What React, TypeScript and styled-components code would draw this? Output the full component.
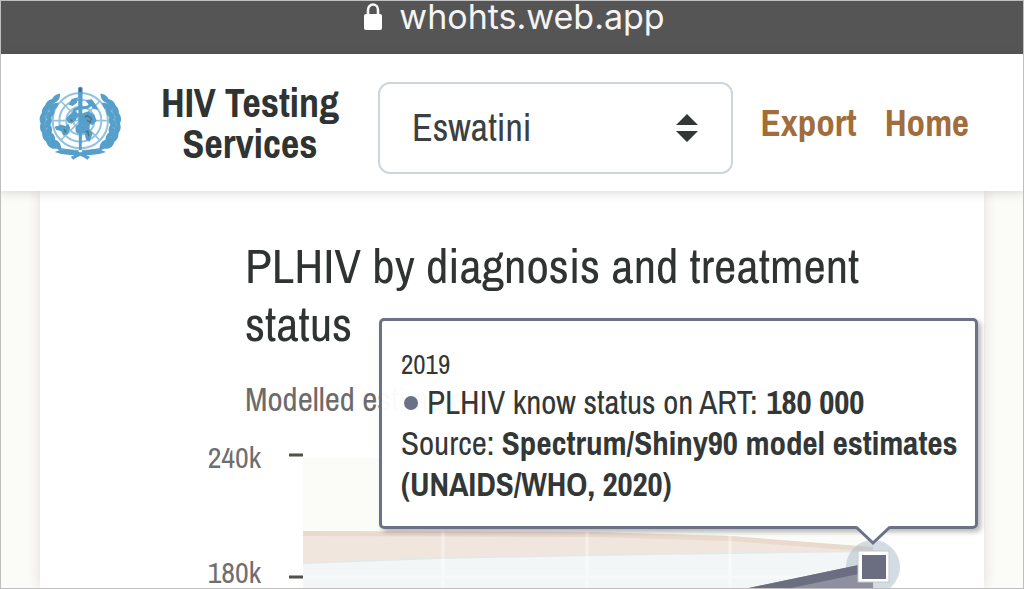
import React from "react";
import styled, { createGlobalStyle } from "styled-components";

const narrow = `"Liberation Sans Narrow", "Archivo Narrow", "Arial Narrow", "Liberation Sans", sans-serif`;
const ink = "#2f3332";
const slate = "#6b7186";

const GlobalStyle = createGlobalStyle`
  *, *::before, *::after { box-sizing: border-box; }
  body { margin: 0; background: #fff; color: ${ink}; font-family: ${narrow}; }
`;

const Shell = styled.div`
  display: flex;
  flex-direction: column;
  height: 100vh;
  overflow: hidden;
  border: 1px solid #bfbfbf;
`;

const AddressBar = styled.div`
  display: flex;
  flex: none;
  justify-content: center;
  align-items: center;
  gap: 16px;
  padding: 0 0 22px 4px;
  height: 53px;
  background: #555;
  color: #f4f4f4;
  font: 400 34px/34px Inter, sans-serif;
`;

const Header = styled.header`
  position: relative;
  z-index: 1;
  display: flex;
  flex: none;
  align-items: center;
  padding: 0 54px 0 37px;
  height: 137px;
  background: #fff;
  box-shadow: 0 2px 10px rgba(0, 0, 0, 0.14);
`;

const SiteTitle = styled.h1`
  margin: 0 34px;
  width: 188px;
  text-align: center;
  font-size: 40px;
  line-height: 41px;
  font-weight: 700;
`;

const SelectWrap = styled.div`
  position: relative;
  flex: 1;
  margin-top: 10px;
`;

const CountrySelect = styled.select`
  appearance: none;
  display: block;
  width: 100%;
  height: 92px;
  padding: 0 80px 0 32px;
  border: 2px solid #ccd6dd;
  border-radius: 12px;
  background: #fff;
  color: #3c403f;
  font: 400 38px/44px ${narrow};
`;

const SelectArrows = styled.svg`
  position: absolute;
  right: 35px;
  top: 32px;
  pointer-events: none;
`;

const Nav = styled.nav`
  display: flex;
  gap: 28px;
  margin-left: 28px;
`;

const NavLink = styled.a`
  color: #a06d3b;
  font-size: 37px;
  line-height: 44px;
  font-weight: 700;
  text-decoration: none;
`;

const Page = styled.main`
  flex: 1;
  min-height: 0;
  padding: 0 39px;
  background: #fbfbf7;
`;

const Card = styled.section`
  height: 100%;
  padding-top: 45px;
  background: #fff;
  box-shadow: 0 0 12px rgba(80, 40, 40, 0.14);
`;

const ChartTitle = styled.h2`
  margin: 0 100px 0 205px;
  font-size: 49px;
  line-height: 58px;
  font-weight: 400;
`;

const Subtitle = styled.p`
  margin: 27px 100px 0 205px;
  color: #6b6b6b;
  font-size: 33px;
  line-height: 40px;
`;

const ChartArea = styled.div`
  position: relative;
  margin: 11px 0 0 160px;
`;

const Chart = styled.svg`
  display: block;
  font-family: ${narrow};
`;

const Tooltip = styled.div`
  position: absolute;
  left: 179px;
  top: -112px;
  width: 599px;
  padding: 25px 16px 21px 19px;
  border: 3px solid ${slate};
  border-radius: 5px;
  background: rgba(255, 255, 255, 0.97);
  box-shadow: 3px 3px 5px rgba(0, 0, 0, 0.28);
  color: #333736;
  font-size: 33px;
  line-height: 41px;
`;

const TooltipYear = styled.div`
  font-size: 27px;
  line-height: 36px;
`;

const TooltipRow = styled.div`
  display: flex;
  align-items: center;
  gap: 9px;
`;

const Dot = styled.span`
  width: 14px;
  height: 14px;
  margin-left: 3px;
  border-radius: 50%;
  background: ${slate};
`;

const Pointer = styled.svg`
  position: absolute;
  right: 84px;
  top: 100%;
`;

function Lock() {
  return (
    <svg width="20" height="29" viewBox="0 0 20 29" aria-hidden="true">
      <path d="M5 14V8a5 5.500 0 0 1 10 0V14" fill="none" stroke="#f8f8f8" strokeWidth="2.600" />
      <rect x="1" y="12" width="18" height="16" rx="2" fill="#fff" />
    </svg>
  );
}

const leaves = [
  [107, 85, 42], [86, 103, 34], [100, 110, 54],
  [74, 123, 14], [91, 132, 38],
  [67, 149, -4], [85, 157, 24],
  [69, 177, -18], [87, 182, 6],
  [78, 203, -34], [96, 205, -12],
  [94, 225, -52], [112, 225, -30],
];

function Branch() {
  return (
    <g>
      <path d="M106 90C68 122 62 190 102 226Q124 246 176 243" fill="none" stroke="#6eadd2" strokeWidth="8" />
      {leaves.map(([x, y, r]) => (
        <path
          key={`${x}-${y}`}
          transform={`translate(${x} ${y}) rotate(${r})`}
          d="M0-20C12-8 12 6 1 19C-12 7-10-8 0-20Z"
          fill="#559fca"
        />
      ))}
      <path d="M104 246Q128 232 160 241T210 261L202 269Q184 253 158 255T104 246Z" fill="#559fca" />
    </g>
  );
}

function Emblem() {
  return (
    <svg width="84" height="76" viewBox="54 45 252 228" role="img" aria-label="World Health Organization">
      <g fill="none" stroke="#93c4df" strokeWidth="6">
        <circle cx="181" cy="152" r="83" />
        <circle cx="181" cy="152" r="63" />
        <circle cx="181" cy="152" r="42" />
        <circle cx="181" cy="152" r="21" />
        <path d="M98 152H264M181 69V235M122 93L240 211M240 93L122 211" strokeWidth="5" />
      </g>
      <g fill="#559fca">
        <path d="M146 104L155 87L174 82L171 98L158 108Z" />
        <path d="M104 170L124 164L136 168L146 162L150 174L144 192L130 197L124 184L108 179Z" />
        <path d="M138 146L151 131L169 123L173 136L168 150L155 161L145 158Z" />
        <path d="M188 130L205 124L223 134L230 152L218 165L210 163L208 178L218 190L209 215L198 209L194 190L184 188L172 191L166 182L179 172L190 166L182 151Z" />
        <path d="M197 91L215 88L226 102L234 120L220 116L210 104Z" />
      </g>
      <path
        d="M204 94C216 104 211 113 184 114C158 116 151 130 180 138C205 145 204 157 183 164C162 172 171 184 186 187"
        fill="none" stroke="#559fca" strokeWidth="9" strokeLinecap="round"
      />
      <path d="M174 54Q181 46 188 54L185 240H177Z" fill="#559fca" />
      <path d="M181 53V66" stroke="#4c6b80" strokeWidth="8" />
      <path d="M194 142L202 137L214 145L211 157L201 151M197 185L204 184L206 199M132 178L138 188M151 149L157 153" fill="none" stroke="#596b7c" strokeWidth="4" />
      <Branch />
      <g transform="translate(362 0) scale(-1 1)"><Branch /></g>
    </svg>
  );
}

export default function App() {
  return (
    <>
      <GlobalStyle />
      <Shell>
        <AddressBar><Lock /><span>whohts.web.app</span></AddressBar>
        <Header>
          <Emblem />
          <SiteTitle>HIV Testing Services</SiteTitle>
          <SelectWrap>
            <CountrySelect aria-label="Country" defaultValue="Eswatini">
              <option>Eswatini</option>
            </CountrySelect>
            <SelectArrows width="22" height="28" viewBox="0 0 22 28" aria-hidden="true">
              <path d="M0 11L11 0L22 11ZM0 17H22L11 28Z" fill="#333736" />
            </SelectArrows>
          </SelectWrap>
          <Nav>
            <NavLink href="#export">Export</NavLink>
            <NavLink href="#home">Home</NavLink>
          </Nav>
        </Header>
        <Page>
          <Card>
            <ChartTitle>PLHIV by diagnosis and treatment status</ChartTitle>
            <Subtitle>Modelled estimates</Subtitle>
            <ChartArea>
              <Chart width="784" height="158" viewBox="200 430 784 158">
                <rect x="303" y="458" width="571" height="130" fill="#fbfcf8" />
                <path d="M303 531L590 532L730 536L873 549V588H303Z" fill="#f0e6de" />
                <path d="M303 531L590 532L730 536L873 547V552L730 541L590 537L303 536Z" fill="#eadace" />
                <path d="M303 563L440 558L590 555L730 553L873 551V588H303Z" fill="#f2f6f7" />
                <path d="M303 563L440 558L590 555L730 553L873 551" fill="none" stroke="#e6e8e6" strokeWidth="2" />
                <path d="M443 531V588M587 531V588M730 531V588M303 577H873" stroke="#fff" strokeWidth="3" opacity="0.4" />
                <circle cx="873" cy="567" r="27" fill="#a9bac8" opacity="0.5" />
                <path d="M744 589L873 562V589Z" fill="#8f909f" />
                <path d="M744 589L873 562V571L786 589Z" fill="#6b6d80" />
                <rect x="858" y="551" width="31" height="31" fill="#fff" stroke="#c5c8cc" />
                <rect x="862" y="555" width="24" height="24" fill="#6b6d80" />
                <path d="M289 455H303M289 577H303" stroke="#4f514b" strokeWidth="3" />
                <g fill="#6f6f6f" fontSize="30" textAnchor="end">
                  <text x="261" y="468">240k</text>
                  <text x="261" y="583">180k</text>
                </g>
              </Chart>
              <Tooltip role="tooltip">
                <TooltipYear>2019</TooltipYear>
                <TooltipRow>
                  <Dot />
                  <span>PLHIV know status on ART:</span>
                  <b>180 000</b>
                </TooltipRow>
                <div>Source: <b>Spectrum/Shiny90 model estimates (UNAIDS/WHO, 2020)</b></div>
                <Pointer width="36" height="20" viewBox="0 0 36 20" aria-hidden="true">
                  <path d="M1 0H35L18 17Z" fill="#fff" />
                  <path d="M1 1L18 17L35 1" fill="none" stroke={slate} strokeWidth="3" />
                </Pointer>
              </Tooltip>
            </ChartArea>
          </Card>
        </Page>
      </Shell>
    </>
  );
}
